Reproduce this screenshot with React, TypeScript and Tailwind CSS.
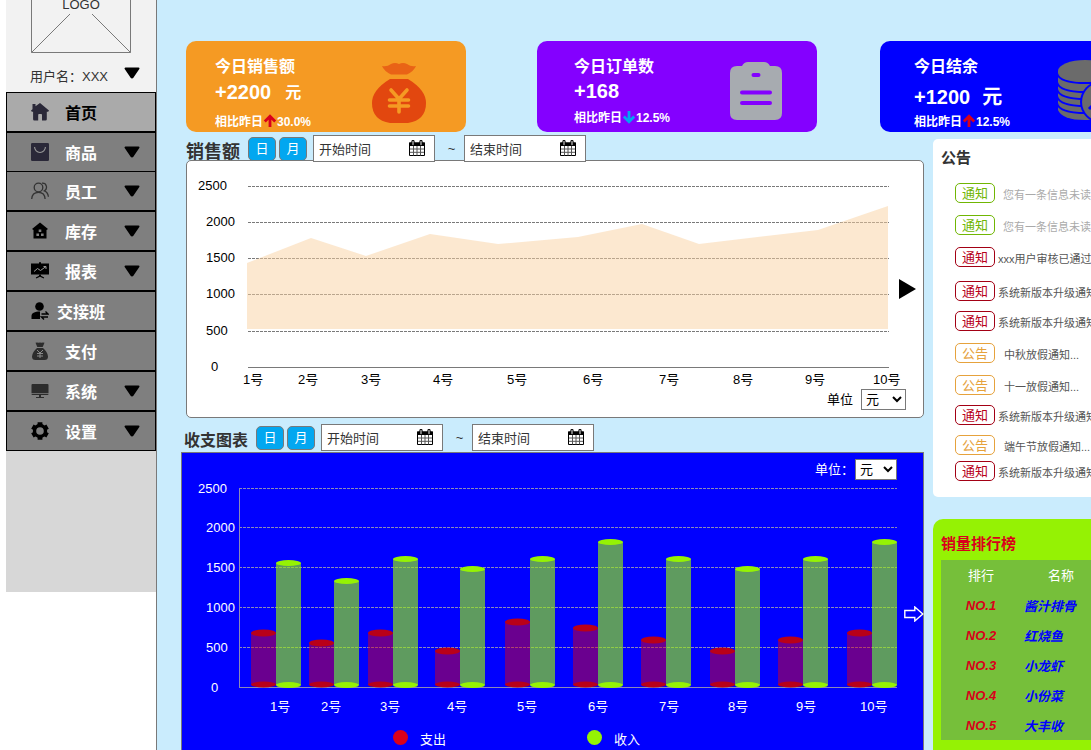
import React from 'react';

interface Point {
    x: number;
    y: number;
}

interface DayBar {
    label: string;
    x: number;
    labelX: number;
    out: number;
    income: number;
}

const MENU = [
    { name: '首页', icon: 'home', expandable: false },
    { name: '商品', icon: 'goods', expandable: true },
    { name: '员工', icon: 'staff', expandable: true },
    { name: '库存', icon: 'stock', expandable: true },
    { name: '报表', icon: 'report', expandable: true },
    { name: '交接班', icon: 'shift', expandable: false },
    { name: '支付', icon: 'pay', expandable: false },
    { name: '系统', icon: 'system', expandable: true },
    { name: '设置', icon: 'settings', expandable: true },
];

const SALES_POINTS: Point[] = [
    { x: 60, y: 102 },
    { x: 124, y: 77 },
    { x: 179, y: 95 },
    { x: 243, y: 73 },
    { x: 311, y: 83 },
    { x: 391, y: 76 },
    { x: 455, y: 63 },
    { x: 512, y: 83 },
    { x: 631, y: 69 },
    { x: 701, y: 45 },
];

const SALES_LABELS = [56, 111, 174, 246, 320, 396, 472, 546, 618, 686];

const Y_LABELS = [
    { text: '2500', dx: 0 },
    { text: '2000', dx: 8 },
    { text: '1500', dx: 8 },
    { text: '1000', dx: 8 },
    { text: '500', dx: 8 },
    { text: '0', dx: 13 },
];

const SALES_GRID = [25, 61, 97, 133, 170, 206];
const BALANCE_GRID = [7, 46, 86, 126, 166, 206];

const BARS: DayBar[] = [
    { label: '1号', x: 69, labelX: 88, out: 152, income: 82 },
    { label: '2号', x: 127, labelX: 139, out: 162, income: 100 },
    { label: '3号', x: 186, labelX: 198, out: 152, income: 78 },
    { label: '4号', x: 253, labelX: 265, out: 170, income: 88 },
    { label: '5号', x: 323, labelX: 335, out: 141, income: 78 },
    { label: '6号', x: 391, labelX: 406, out: 147, income: 61 },
    { label: '7号', x: 459, labelX: 477, out: 159, income: 78 },
    { label: '8号', x: 528, labelX: 546, out: 170, income: 88 },
    { label: '9号', x: 596, labelX: 614, out: 159, income: 78 },
    { label: '10号', x: 665, labelX: 678, out: 152, income: 61 },
];

const GREEN = 'border-[#70b603] text-[#70b603]';
const RED = 'border-[#a30014] text-[#b8001a]';
const ORANGE = 'border-[#e6a23c] text-[#e6a23c]';

const NOTICES = [
    { tag: '通知', tone: GREEN, text: '您有一条信息未读...', style: 'text-[#aaaaaa] ml-2', gap: 'mt-[15px]' },
    { tag: '通知', tone: GREEN, text: '您有一条信息未读...', style: 'text-[#aaaaaa] ml-2', gap: 'mt-3' },
    { tag: '通知', tone: RED, text: 'xxx用户审核已通过...', style: 'text-[#555555] ml-[3px]', gap: 'mt-3' },
    { tag: '通知', tone: RED, text: '系统新版本升级通知...', style: 'text-[#555555] ml-[3px]', gap: 'mt-3.5' },
    { tag: '通知', tone: RED, text: '系统新版本升级通知...', style: 'text-[#555555] ml-[3px]', gap: 'mt-2.5' },
    { tag: '公告', tone: ORANGE, text: '中秋放假通知...', style: 'text-[#555555] ml-[9px]', gap: 'mt-3' },
    { tag: '公告', tone: ORANGE, text: '十一放假通知...', style: 'text-[#555555] ml-[9px]', gap: 'mt-3' },
    { tag: '通知', tone: RED, text: '系统新版本升级通知...', style: 'text-[#555555] ml-[3px]', gap: 'mt-2.5' },
    { tag: '公告', tone: ORANGE, text: '端午节放假通知...', style: 'text-[#555555] ml-[9px]', gap: 'mt-2.5' },
    { tag: '通知', tone: RED, text: '系统新版本升级通知...', style: 'text-[#555555] ml-[3px]', gap: 'mt-1.5' },
];

const RANKING = ['酱汁排骨', '红烧鱼', '小龙虾', '小份菜', '大丰收'];

const MenuIcon: React.FC<{ name: string }> = ({ name }) => {
    switch (name) {
        case 'home':
            return (
                <svg viewBox="0 0 18 18" className="size-[18px]" fill="#2a2838">
                    <path d="M1.500 1h3v2.200L9 0l9 7.600-.8 1.200h-1.400v7.400q0 1.300-1.300 1.300H11v-5.600q0-.8-.8-.8H8q-.8 0-.8.8v5.600H3.400q-1.300 0-1.300-1.300V8.800H.8L0 7.600l1.500-1.400z" />
                </svg>
            );
        case 'goods':
            return (
                <svg viewBox="0 0 20 20" className="size-5">
                    <rect width="20" height="20" rx="1.500" fill="#2a2838" />
                    <path d="M4 4.500a6 6 0 0 0 12 0" fill="none" stroke="#999" strokeWidth="1.200" />
                </svg>
            );
        case 'staff':
            return (
                <svg viewBox="0 0 18 18" className="size-[18px]" fill="none" stroke="#333" strokeWidth="1.300">
                    <circle cx="7.500" cy="5.500" r="4.300" />
                    <path d="M.7 17c.2-4 2.600-6.700 6.800-6.700s6.400 2.700 6.600 6.700M11 1.200c5-.4 5.800 5.600 2.400 7.600 2.400 1 3.700 3 4 6" />
                </svg>
            );
        case 'stock':
            return (
                <svg viewBox="0 0 18 18" className="size-[18px]">
                    <path d="M9 .5 17 7l-1.500 1v8.500h-13V8L1 7z" fill="#000" />
                    <path d="M7.700 7.500h2.600v2.600H7.700zM5.400 11.500H8v2.600H5.400zM10 11.500h2.600v2.600H10z" fill="#808080" />
                </svg>
            );
        case 'report':
            return (
                <svg viewBox="0 0 18 18" className="size-[18px]">
                    <path d="M0 1.500h8V.3h2v1.200h8v11H0z" fill="#000" />
                    <path d="m3 9.500 3.500-3 3 2 5.500-4m-2.500 0H15V7" fill="none" stroke="#999" />
                    <path d="M8 12.500h2v1.300l3.200 1.700-.5 1L9 14.800l-3.700 1.700-.5-1L8 13.800z" fill="#000" />
                </svg>
            );
        case 'shift':
            return (
                <svg viewBox="0 0 18 18" className="size-[18px]">
                    <circle cx="8.500" cy="4.500" r="4.300" />
                    <path d="M.5 17v-3c0-3 3-4.500 8.500-4.500V17z" />
                    <path d="M10.500 12H17l-2.500-2.500M17 15h-6.500l2.500 2.500" fill="none" stroke="#000" strokeWidth="1.400" />
                </svg>
            );
        case 'pay':
            return (
                <svg viewBox="0 0 18 18" className="size-[18px]">
                    <path d="M4.500.8Q6 0 7.500.8q1.500-.8 3 0 1.500-.8 3 0L11.700 5H6.300zM6 6h6q5 4.500 5 8.500Q17 18 13.500 18h-9Q1 18 1 14.500 1 10.500 6 6" fill="#2c2c2c" />
                    <path d="m6 8 3 3 3-3m-3 3v5m-3-4.500h6M6 14h6" fill="none" stroke="#888" />
                </svg>
            );
        case 'system':
            return (
                <svg viewBox="0 0 18 18" className="size-[18px]" fill="#2c2c2c">
                    <path d="M1.500 2h15q1 0 1 1v8H.5V3q0-1 1-1M.5 11.700h17v.5q0 .8-1 .8h-15q-1 0-1-.8zM8 13h2v2h3v1H5v-1h3z" />
                </svg>
            );
        default:
            return (
                <svg viewBox="0 0 18 18" className="size-[18px]" fill="none" stroke="#000">
                    <circle cx="9" cy="9" r="5.500" strokeWidth="3.400" />
                    <path d="M9 .2v3M9 14.800v3M1.400 4.600 4 6.100M14 11.900l2.600 1.500M1.400 13.400 4 11.900M14 6.100l2.600-1.500" strokeWidth="4.800" />
                </svg>
            );
    }
};

const Caret: React.FC = () => (
    <svg viewBox="0 0 16 12" className="h-3 w-4 shrink-0">
        <path d="M1.500 1.500h13L8.700 10q-.7.800-1.400 0z" stroke="#000" strokeWidth="2" strokeLinejoin="round" />
    </svg>
);

const CalendarIcon: React.FC = () => (
    <svg viewBox="0 0 16 16" className="pointer-events-none absolute right-2.5 top-[5px] size-4">
        <path d="M.5 3h15v12.500H.5z" fill="#fff" stroke="#000" />
        <path d="M0 2.500h16V6H0z" fill="#000" />
        <path d="M4.500 6v9.500M8 6v9.500M11.500 6v9.500M1 9h14M1 12.300h14" stroke="#555" />
        <path d="M4 1.500v3M12 1.500v3" stroke="#000" strokeWidth="3.200" strokeLinecap="round" />
        <path d="M4 1.500v3M12 1.500v3" stroke="#999" strokeWidth="1.600" strokeLinecap="round" />
    </svg>
);

const DateInput: React.FC<{ label: string }> = ({ label }) => (
    <div className="relative">
        <input
            type="text"
            aria-label={label}
            placeholder={label}
            className="block h-[27px] w-[122px] border border-[#797979] bg-white pl-[5px] pr-7 pt-0.5 text-[13px] text-[#333333] placeholder:text-[#333333]"
        />
        <CalendarIcon />
    </div>
);

const Toolbar: React.FC<{ title: string; titleClass: string }> = ({ title, titleClass }) => (
    <div className="flex h-[27px] items-center">
        <h2 className={`${titleClass} shrink-0 pt-1.5 font-bold leading-5 text-[#333333]`}>{title}</h2>
        <div className="ml-2 flex gap-[3px]">
            {['日', '月'].map((unit) => (
                <button
                    key={unit}
                    type="button"
                    className="h-6 w-7 rounded-[5px] border border-[#797979] bg-[#02a7f0] text-[13px] leading-5 text-white"
                >
                    {unit}
                </button>
            ))}
        </div>
        <div className="ml-1.5 flex items-center">
            <DateInput label="开始时间" />
            <span className="w-[29px] pl-1 text-center text-[13px] text-[#333333]">~</span>
            <DateInput label="结束时间" />
        </div>
    </div>
);

const UpDownArrow: React.FC<{ up: boolean }> = ({ up }) => (
    <svg viewBox="0 0 14 14" className={up ? 'size-3.5 text-[#d9001b]' : 'size-3.5 rotate-180 text-[#02a7f0]'}>
        <path d="M7 13V2.500M1.800 7.500 7 2.300l5.200 5.200" fill="none" stroke="currentColor" strokeWidth="2.800" />
    </svg>
);

const MoneyBag: React.FC = () => (
    <svg viewBox="0 0 54 60" className="mt-3 h-[60px] w-[54px]">
        <path d="M10 3q5 1 9-2 4-2 8 0 4-2 8 0 4 3 9 2-2 5-9 8.500H19Q12 8 10 3" fill="#e96316" />
        <path d="M18 16h18q18 11 18 24 0 17-18 20H18Q0 57 0 40 0 27 18 16" fill="#e2470f" />
        <path d="m19 27 8 9 8-9M27 36v13M17.500 37h19M17.500 43h19" fill="none" stroke="#f59a23" strokeWidth="3.600" strokeLinecap="round" />
    </svg>
);

const Clipboard: React.FC = () => (
    <svg viewBox="0 0 52 58" className="mt-2 h-[58px] w-[52px]">
        <path d="M7 4h5q2-4 6-4h16q4 0 6 4h5q7 0 7 7v40q0 7-7 7H7q-7 0-7-7V11q0-7 7-7" fill="#a7abb0" />
        <path d="M23.500 13h5M12 30.500h28M12 41h28" stroke="#8400ff" strokeWidth="4" strokeLinecap="round" />
    </svg>
);

const Coins: React.FC = () => (
    <svg viewBox="0 0 70 62" className="mt-2 h-[62px] w-[70px]">
        <path d="M0 11v39q4 10 27 10t27-10V11z" fill="#6b6b6b" />
        <path
            d="M-1 13q2 10 28 10t28-10M-1 22q2 10 28 10t28-10M-1 29q2 10 28 10t28-10M-1 36q2 10 28 10t28-10M-1 43q2 10 28 10t28-10"
            fill="none"
            stroke="#00f"
            strokeWidth="2"
        />
        <ellipse cx="27" cy="11" rx="27" ry="11" fill="#6b6b6b" />
        <circle cx="43" cy="42" r="21" fill="#00f" />
        <circle cx="43" cy="42" r="19" fill="#6b6b6b" />
        <path d="m31 49 9-9 6 6 11-13" fill="none" stroke="#00f" strokeWidth="3" />
    </svg>
);

const UnitSelect: React.FC<{ id: string; label: string; dark?: boolean }> = ({ id, label, dark }) => (
    <div className={`flex items-center justify-end text-[13px] ${dark ? 'gap-px text-white' : 'gap-2 text-black'}`}>
        <label htmlFor={id} className="pt-0.5 leading-5">
            {label}
        </label>
        <select
            id={id}
            className={`h-[21px] border border-[#797979] bg-white text-[13px] text-black ${dark ? 'w-[42px]' : 'w-[45px]'}`}
        >
            <option>元</option>
            <option>万元</option>
        </select>
    </div>
);

const Sidebar: React.FC = () => (
    <aside className="w-[157px] shrink-0 border-r border-[#797979] bg-white pl-1.5">
        <div className="flex h-[92px] flex-col justify-end overflow-hidden bg-[#f2f2f2]">
            <svg viewBox="0 0 100 100" className="ml-[25px] size-[100px] shrink-0">
                <path d="M.5.5h99v99H.5zl99 99M99.500.5l-99 99" fill="none" stroke="#797979" />
                <path d="M20 40h60v21H20z" fill="#f2f2f2" />
                <text x="50" y="55.500" textAnchor="middle" fontSize="13" fill="#333">
                    LOGO
                </text>
            </svg>
            <div className="flex h-[39px] shrink-0 items-center justify-between pl-6 pr-4">
                <span className="pt-2 text-[13px] text-[#333333]">用户名：XXX</span>
                <Caret />
            </div>
        </div>
        <nav>
            {MENU.map((item, i) => (
                <a
                    key={item.name}
                    href="#"
                    className={`flex h-10 items-center border border-black pl-6 pr-[15px] ${i === 2 ? '-mt-px' : ''} ${
                        i === 0 ? 'bg-[#aaaaaa] text-black' : 'bg-[#7f7f7f] text-white'
                    }`}
                >
                    <span className="flex w-[18px] justify-center">
                        <MenuIcon name={item.icon} />
                    </span>
                    <span
                        className={`flex-1 pt-[3px] text-base font-bold ${item.icon === 'shift' ? 'pl-2' : 'pl-4'}`}
                    >
                        {item.name}
                    </span>
                    {item.expandable && <Caret />}
                </a>
            ))}
        </nav>
        <div className="h-[141px] bg-[#d7d7d7]" />
    </aside>
);

const StatCards: React.FC = () => (
    <div className="flex pl-[5px] pt-[41px] font-bold text-white">
        <section className="mr-[71px] flex h-[91px] w-[280px] shrink-0 items-center justify-between rounded-[10px] bg-[#f59a23] pl-[29px] pr-10">
            <div className="h-full pt-3.5">
                <h3 className="text-base leading-6">今日销售额</h3>
                <p className="flex items-center gap-3.5 text-xl leading-6">
                    +2200 <span className="pt-0.5 text-base leading-6">元</span>
                </p>
                <p className="mt-[9px] flex text-xs leading-4">
                    相比昨日
                    <UpDownArrow up />
                    30.0%
                </p>
            </div>
            <MoneyBag />
        </section>
        <section className="mr-[63px] flex h-[91px] w-[280px] shrink-0 items-center justify-between rounded-[10px] bg-[#8400ff] pl-[37px] pr-[35px]">
            <div className="h-full pt-3.5">
                <h3 className="text-base leading-6">今日订单数</h3>
                <p className="text-xl leading-6">+168</p>
                <p className="mt-[7px] flex text-xs leading-4">
                    相比昨日
                    <UpDownArrow up={false} />
                    12.5%
                </p>
            </div>
            <Clipboard />
        </section>
        <section className="flex h-[91px] w-[280px] shrink-0 items-center justify-between rounded-[10px] bg-[#0000ff] pl-[34px] pr-8">
            <div className="h-full pt-3.5">
                <h3 className="text-base leading-6">今日结余</h3>
                <p className="mt-1.5 flex gap-3 text-xl leading-6">
                    +1200 <span>元</span>
                </p>
                <p className="mt-[5px] flex text-xs leading-4">
                    相比昨日
                    <UpDownArrow up />
                    12.5%
                </p>
            </div>
            <Coins />
        </section>
    </div>
);

const SalesChart: React.FC = () => {
    const area = SALES_POINTS.map((p) => `${p.x},${p.y}`).join(' ');

    return (
        <section className="relative ml-[5px] rounded-[5px] border border-[#797979] bg-white">
            <svg viewBox="0 0 736 226" className="block w-full" fontSize="13">
                {SALES_GRID.map((y, i) => (
                    <g key={y}>
                        <text x={11 + Y_LABELS[i].dx} y={y + 4}>
                            {Y_LABELS[i].text}
                        </text>
                        <path d={`M61 ${y + 0.5}H702`} stroke="#797979" strokeDasharray={i < 5 ? '3 1' : undefined} />
                    </g>
                ))}
                <polygon points={`${area} 701,168 60,168`} fill="#f9d1a1" fillOpacity="0.5" />
                {SALES_LABELS.map((x, i) => (
                    <text key={x} x={x} y="223">
                        {i + 1}号
                    </text>
                ))}
            </svg>
            <div className="pb-[7px] pr-[17px] pt-px">
                <UnitSelect id="sales-unit" label="单位" />
            </div>
            <button type="button" aria-label="下一页" className="absolute right-[7px] top-[46%]">
                <svg viewBox="0 0 17 20" className="h-5 w-[17px]">
                    <path d="M0 0v20l17-10z" />
                </svg>
            </button>
        </section>
    );
};

const BalanceChart: React.FC = () => (
    <section className="relative flex-1 border border-b-0 border-[#797979] bg-[#0000ff]">
        <div className="h-7 pr-[26px] pt-[5px]">
            <UnitSelect id="balance-unit" label="单位：" dark />
        </div>
        <svg viewBox="0 0 741 241" className="block w-full" fontSize="13" fill="#fff">
            {BALANCE_GRID.map((y, i) => (
                <g key={y}>
                    <text x={16 + Y_LABELS[i].dx} y={y + 5}>
                        {Y_LABELS[i].text}
                    </text>
                    <path d={`M57 ${y + 0.5}H715`} stroke="#8a8ab8" strokeDasharray={i < 5 ? '3 1' : undefined} />
                </g>
            ))}
            <path d="M57.500 7v200" stroke="#8a8ab8" />
            {BARS.map((bar) => (
                <g key={bar.label}>
                    <path d={`M${bar.x} ${bar.out}h25V204h-25z`} fill="#d9001b" fillOpacity="0.49" />
                    <ellipse cx={bar.x + 12.5} cy={bar.out} rx="12.500" ry="3.500" fill="#b90019" />
                    <ellipse cx={bar.x + 12.5} cy="203.500" rx="12.500" ry="3" fill="#b90019" />
                    <path d={`M${bar.x + 25} ${bar.income}h25V204h-25z`} fill="#95f204" fillOpacity="0.64" />
                    <ellipse cx={bar.x + 37.5} cy={bar.income} rx="12.500" ry="3" fill="#95f204" />
                    <ellipse cx={bar.x + 37.5} cy="204" rx="12.500" ry="3" fill="#95f204" />
                    <text x={bar.labelX} y="230">
                        {bar.label}
                    </text>
                </g>
            ))}
        </svg>
        <div className="flex h-7 pt-[3px] text-[13px] text-white">
            <div className="ml-[211px] flex items-center gap-3">
                <span className="size-[15px] rounded-full bg-[#d9001b]" />
                <span className="pt-1">支出</span>
            </div>
            <div className="ml-[141px] flex items-center gap-3">
                <span className="size-[15px] rounded-full bg-[#95f204]" />
                <span className="pt-1">收入</span>
            </div>
        </div>
        <button type="button" aria-label="下一页" className="absolute -right-px top-[153px]">
            <svg viewBox="0 0 20 16" className="h-4 w-5">
                <path d="M.8 4.500h10V1l8 7-8 7v-3.500H.8z" fill="none" stroke="#fff" strokeWidth="1.400" />
            </svg>
        </button>
    </section>
);

const NoticePanel: React.FC = () => (
    <section className="h-[358px] rounded-[5px] bg-white pt-[9px]">
        <h2 className="pl-2 text-[15px] font-bold leading-5 text-[#333333]">公告</h2>
        <ul className="pl-[22px]">
            {NOTICES.map((item, i) => (
                <li key={i} className={`${item.gap} flex h-5 items-center whitespace-nowrap`}>
                    <span className={`${item.tone} h-5 w-10 rounded-[5px] border text-center text-[13px] leading-5`}>
                        {item.tag}
                    </span>
                    <span className={`${item.style} pt-1 text-[11px] leading-4`}>{item.text}</span>
                </li>
            ))}
        </ul>
    </section>
);

const RankingPanel: React.FC = () => (
    <section className="mt-[22px] flex-1 rounded-t-[10px] bg-[#95f204] px-2 pt-[15px]">
        <h2 className="h-[26px] text-[15px] font-bold leading-5 text-[#d9001b]">销量排行榜</h2>
        <table className="w-full table-fixed bg-[#76bf3a] text-[13px]">
            <thead>
                <tr className="h-[30px] text-white">
                    <th className="w-20 pt-0.5 font-normal">排行</th>
                    <th className="w-20 pt-0.5 font-normal">名称</th>
                    <th />
                </tr>
            </thead>
            <tbody>
                {RANKING.map((name, i) => (
                    <tr key={name} className="h-[30px] font-bold italic">
                        <td className="pt-0.5 text-center text-[#d9001b]">NO.{i + 1}</td>
                        <td className="whitespace-nowrap pl-[3px] pt-[3px] text-[#0000ff]">{name}</td>
                        <td />
                    </tr>
                ))}
            </tbody>
        </table>
    </section>
);

const App: React.FC = () => (
    <div className="flex min-h-screen bg-[#caecfd] font-['Liberation_Sans','Noto_Sans_CJK_SC',sans-serif] text-black">
        <Sidebar />
        <main className="flex min-w-0 flex-1 overflow-hidden">
            <div className="flex min-w-[1006px] flex-1 flex-col pl-6">
                <StatCards />
                <div className="flex flex-1">
                    <div className="mr-[9px] flex min-w-0 flex-1 flex-col">
                        <div className="relative z-10 h-7 pl-[5px] pt-[3px]">
                            <Toolbar title="销售额" titleClass="text-lg" />
                        </div>
                        <SalesChart />
                        <div className="h-[34px] pl-[3px] pt-1.5">
                            <Toolbar title="收支图表" titleClass="text-base" />
                        </div>
                        <BalanceChart />
                    </div>
                    <div className="flex w-[230px] shrink-0 flex-col pt-[7px]">
                        <NoticePanel />
                        <RankingPanel />
                    </div>
                </div>
            </div>
        </main>
    </div>
);

export default App;
